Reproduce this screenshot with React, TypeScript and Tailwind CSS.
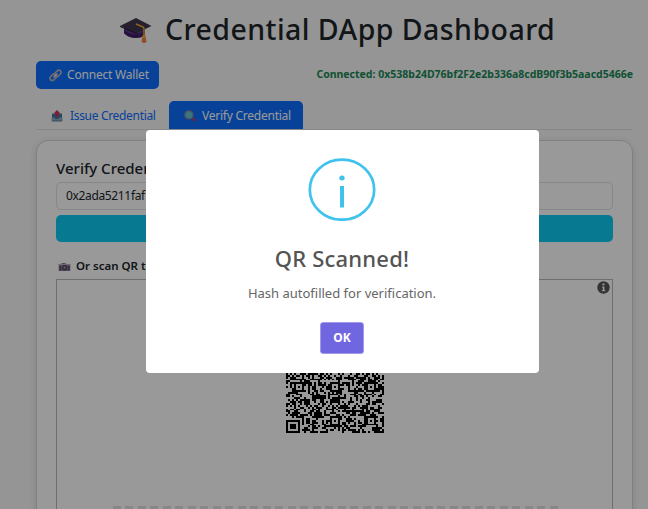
import React from "react";

const SIZE = 49;
const ALIGN = [6, 24, 42];

function moduleOn(r: number, c: number): boolean {
  const finder = (r0: number, c0: number): boolean | null => {
    const y = r - r0;
    const x = c - c0;
    if (y < -1 || y > 7 || x < -1 || x > 7) return null;
    const d = Math.max(Math.abs(y - 3), Math.abs(x - 3));
    return d === 3 || d <= 1;
  };
  for (const [a, b] of [[0, 0], [0, SIZE - 7], [SIZE - 7, 0]]) {
    const f = finder(a, b);
    if (f !== null) return f;
  }
  for (const ar of ALIGN) {
    for (const ac of ALIGN) {
      const d = Math.max(Math.abs(r - ar), Math.abs(c - ac));
      if (d <= 2 && !(ar === 6 && ac !== 24) && !(ar === 42 && ac === 6)) return d !== 1;
    }
  }
  if (r === 6) return c % 2 === 0;
  if (c === 6) return r % 2 === 0;
  let h = (r * 374761393 + c * 668265263) | 0;
  h = Math.imul(h ^ (h >>> 13), 1274126177);
  return ((h ^ (h >>> 16)) & 255) < 136;
}

function QrCode() {
  let d = "";
  for (let r = 0; r < SIZE; r++) {
    for (let c = 0; c < SIZE; c++) if (moduleOn(r, c)) d += `M${c} ${r}h1v1h-1z`;
  }
  return (
    <svg viewBox="0 0 49 49" preserveAspectRatio="none" className="h-[92px] w-[98px]" shapeRendering="crispEdges">
      <path d={d} fill="#000" />
    </svg>
  );
}

function GradCap() {
  return (
    <svg viewBox="0 0 32 26" className="h-[26px] w-8 shrink-0">
      <path d="M4 9v6c2 3 7 5 12 5 4 0 7-1 9-3V9z" fill="#59358c" />
      <path d="M4 12c5 5 14 6 21 1v4c-3 3-14 5-21-2z" fill="#402065" />
      <path d="M16 0 31.500 8 17 15 0 8z" fill="#40364d" />
      <path d="M0 8 17 15v1L0 9z" fill="#211b2b" />
      <path d="m16 6 7 3q1 .5 1 2v8" fill="none" stroke="#e9a32d" strokeWidth="1.500" />
      <path d="M22.500 18h3l1 6q-2 2-5 0z" fill="#ef8344" />
      <circle cx="24" cy="18.500" r="1.700" fill="#f4ad36" />
    </svg>
  );
}

function LinkIcon() {
  return (
    <svg viewBox="0 0 13 13" className="h-[13px] w-[13px] shrink-0" fill="none" stroke="#bfb5bd" strokeWidth="1.500">
      <rect x="0.500" y="6" width="7.500" height="4.500" rx="2.250" transform="rotate(-45 4.250 8.250)" />
      <rect x="5" y="2.300" width="7.500" height="4.500" rx="2.250" transform="rotate(-45 8.750 4.550)" />
      <path d="m4.500 8.500 4-4" stroke="#ded3d9" />
    </svg>
  );
}

function OutboxIcon() {
  return (
    <svg viewBox="0 0 12 12" className="h-3 w-3 shrink-0">
      <path d="M1 3.500h10V9H1z" fill="#3f7ba6" />
      <path d="M.500 7.500h3l1 1.500h3l1-1.500h3V11H.500z" fill="#8fabc0" />
      <path d="M1 10.500h10v1H1z" fill="#5b7f9b" />
      <path d="m6 0 3.500 3.500h-2V7h-3V3.500h-2z" fill="#d52b57" />
    </svg>
  );
}

function SearchIcon() {
  return (
    <svg viewBox="0 0 12 12" className="h-3 w-3 shrink-0">
      <path d="m8 8 2.800 2.400" stroke="#b04068" strokeWidth="2.200" strokeLinecap="round" />
      <circle cx="4.900" cy="4.900" r="4.100" fill="#62c6d0" stroke="#8486a2" strokeWidth="1.200" />
    </svg>
  );
}

function CameraIcon() {
  return (
    <svg viewBox="0 0 13 9" className="h-[8px] w-[13px] shrink-0">
      <path d="M0 1.500h3L3.500 0h4L8 1.500h5V9H0z" fill="#81768a" />
      <path d="M0 1h13v1.500H0z" fill="#b8aebe" />
      <circle cx="6.700" cy="5.200" r="2.900" fill="#4d4356" />
      <circle cx="6.700" cy="5.200" r="1.500" fill="#9889a8" />
      <path d="M1 3.500h1.500V8H1zM10.500 3.500H12V8h-1.500z" fill="#5a4f62" />
    </svg>
  );
}

function Dashboard() {
  return (
    <div className="flex h-[509px] flex-col overflow-hidden bg-[#f8f9fa] pl-9 pr-[15px] text-[#212529]">
      <h1 className="flex h-[61px] shrink-0 items-start pl-[84px] pt-[9px]">
        <span className="mt-[9px] flex"><GradCap /></span>
        <span className="ml-[13px] whitespace-nowrap text-[28.500px] font-medium leading-10 tracking-[0.450px]">Credential DApp Dashboard</span>
      </h1>
      <div className="flex h-7 shrink-0 items-center justify-between">
        <button className="flex h-7 w-[123px] items-center rounded-[5px] bg-[#0d6efd] pl-[12.500px] text-white">
          <LinkIcon />
          <span className="ml-[5.500px] whitespace-nowrap text-[12px] tracking-[-0.200px]">Connect Wallet</span>
        </button>
        <span className="whitespace-nowrap text-[10.500px] font-bold text-[#198754]">Connected: 0x538b24D76bf2F2e2b336a8cdB90f3b5aacd5466e</span>
      </div>
      <nav className="mt-3 flex h-[29px] shrink-0 border-b border-[#dee2e6] text-[12px] tracking-[-0.320px]">
        <div className="flex w-[133px] items-center pl-[15px] pt-px text-[#0d6efd]">
          <OutboxIcon />
          <span className="ml-[7px] whitespace-nowrap">Issue Credential</span>
        </div>
        <div className="flex w-[134px] items-center rounded-t-[5px] bg-[#0d6efd] pl-[15px] pt-px text-white">
          <SearchIcon />
          <span className="ml-[6px] whitespace-nowrap tracking-[-0.240px]">Verify Credential</span>
        </div>
      </nav>
      <main className="mt-[10px] flex h-[400px] shrink-0 flex-col rounded-t-xl border border-[#d3d5d7] bg-white px-[19px] shadow-[0_2px_8px_rgba(0,0,0,0.12)]">
        <h2 className="mt-[17px] h-6 shrink-0 whitespace-nowrap text-[15px] font-medium leading-[20px]">Verify Credential</h2>
        <div className="flex h-[28px] shrink-0 items-center rounded-[5px] border border-[#dee2e6] pl-[9px] text-[12px] tracking-[-0.350px]">0x2ada5211faf</div>
        <div className="mt-[5px] h-[27px] shrink-0 rounded-[5px] bg-[#0dcaf0]" />
        <div className="mt-4 flex h-[21px] shrink-0 items-start text-[11.500px] font-semibold leading-4">
          <span className="ml-[2px] mt-[5px] flex"><CameraIcon /></span>
          <span className="ml-[5px] whitespace-nowrap">Or scan QR to verify</span>
        </div>
        <section className="flex h-[300px] shrink-0 flex-col border border-[#b8b8b8]">
          <div className="flex h-[61px] shrink-0 justify-end pr-[2px] pt-px">
            <svg viewBox="0 0 13 13" className="h-[13px] w-[13px]">
              <circle cx="6.500" cy="6.500" r="6.200" fill="#555" />
              <circle cx="6.500" cy="3.400" r="1.100" fill="#fff" />
              <path d="M5 5.400h2.400v3.800h1v1H4.800v-1h1V6.400H5z" fill="#fff" />
            </svg>
          </div>
          <div className="flex h-[92px] shrink-0 pl-[229px]"><QrCode /></div>
          <div className="ml-14 mt-[73px] h-[3px] w-[445px] shrink-0 bg-[repeating-linear-gradient(90deg,#e3e3e3_0_8px,transparent_8px_12.480px)]" />
        </section>
      </main>
    </div>
  );
}

export default function App() {
  return (
    <div className="relative h-[509px] w-[648px] overflow-hidden font-['Noto_Sans','Open_Sans',sans-serif]">
      <Dashboard />
      <div className="absolute inset-0 bg-black/40 pl-[146px] pt-[129.500px]">
        <div role="dialog" className="flex h-[243px] w-[393px] flex-col items-center rounded-[4px] bg-white pr-px pt-[27px]">
          <svg viewBox="0 0 68 64" className="h-16 w-[68px] shrink-0">
            <ellipse cx="34" cy="32.700" rx="32.200" ry="30" fill="none" stroke="#3fc3ee" strokeWidth="2.700" />
            <ellipse cx="34" cy="21" rx="2.700" ry="2.500" fill="#3fc3ee" />
            <path d="M32 29h4V50.500h-4z" fill="#3fc3ee" />
          </svg>
          <h2 className="mt-[22.500px] whitespace-nowrap text-[22px] font-medium leading-[30px] tracking-[0.200px] text-[#545454]">QR Scanned!</h2>
          <p className="mt-[9.500px] whitespace-nowrap text-[13px] leading-5 text-[#666]">Hash autofilled for verification.</p>
          <button className="mt-[19px] flex h-8 w-11 items-center justify-center rounded-[3px] border border-[#a19aeb] bg-[#7066e0] pt-px text-[12px] font-bold text-white">OK</button>
        </div>
      </div>
    </div>
  );
}
